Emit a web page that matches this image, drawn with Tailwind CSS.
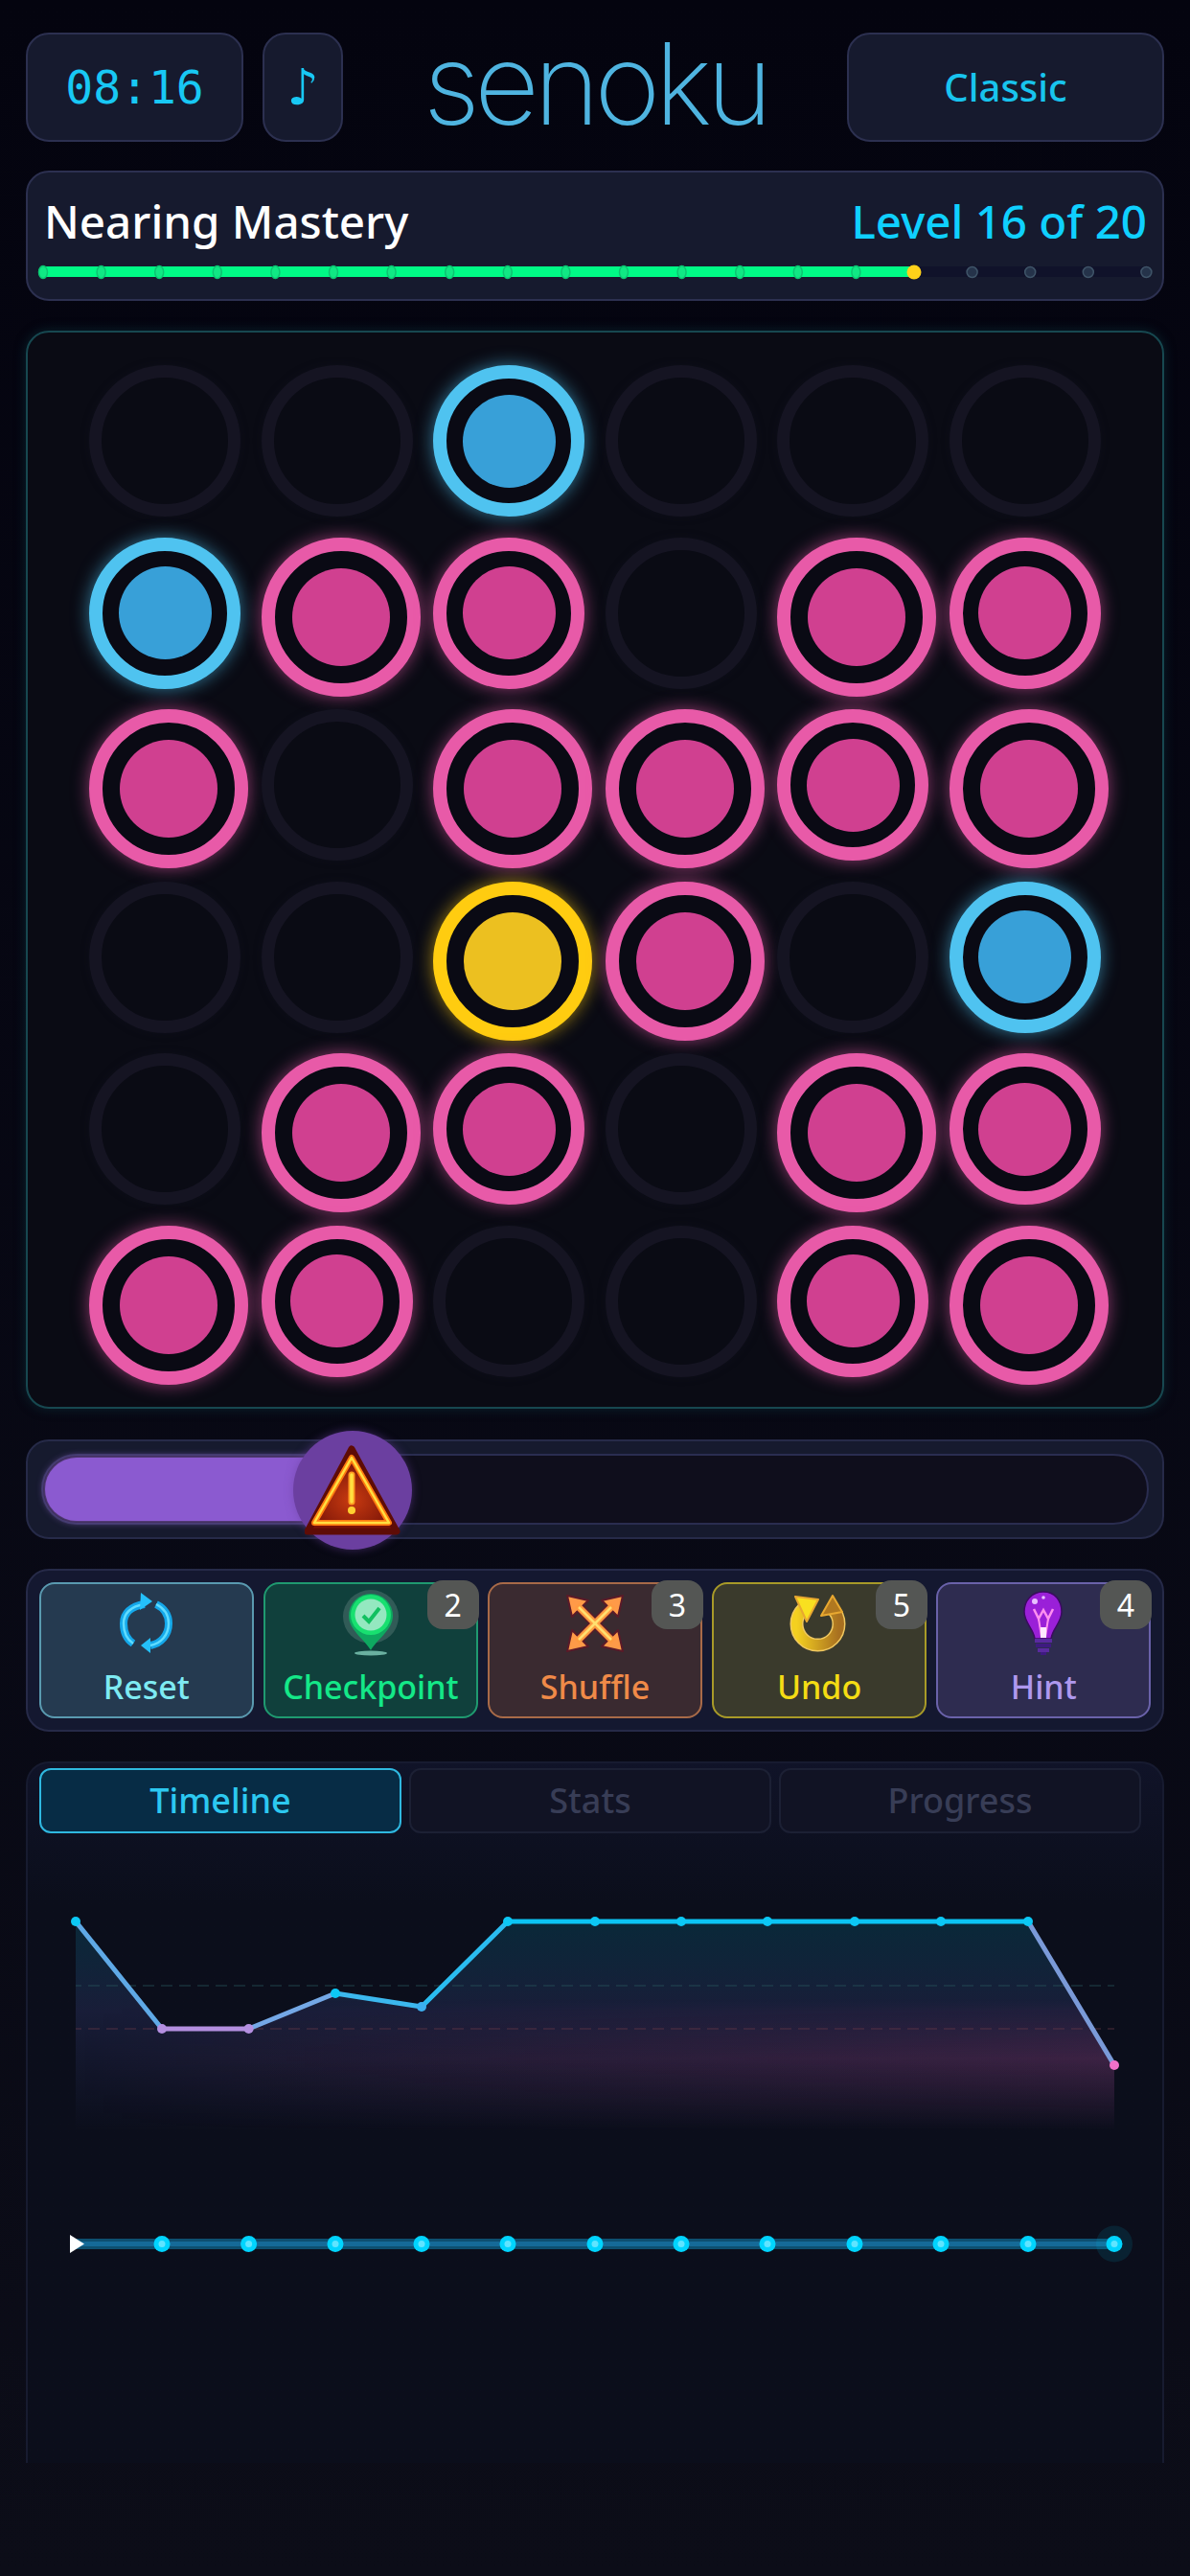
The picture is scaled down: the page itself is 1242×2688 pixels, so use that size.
<!DOCTYPE html>
<html lang="en">
<head>
    <meta charset="UTF-8">
    <meta name="viewport" content="width=device-width, initial-scale=1.0">
    <title>Senoku</title>
    <script src="https://cdn.jsdelivr.net/npm/@tailwindcss/browser@4"></script>
</head>
<body class="w-[1242px] h-[2688px] overflow-hidden bg-linear-to-b from-[#04040f] to-[#0c0d18] font-['Noto_Sans',sans-serif] px-[27px] pt-[34px]">

    <!-- header -->
    <header class="flex items-stretch h-[114px]">
        <div class="w-[227px] flex items-center justify-center rounded-[24px] border-2 border-[#2c3050] bg-[#161a2e] font-['DejaVu_Sans_Mono',monospace] text-[48px] text-[#18c8f4]">08:16</div>
        <div class="w-[84px] ml-[20px] flex items-center justify-center rounded-[24px] border-2 border-[#2c3050] bg-[#161a2e] font-['DejaVu_Sans',sans-serif] text-[52px] text-[#18c8f4]">♪</div>
        <div class="flex-1 flex items-center justify-center font-['Inter',sans-serif] font-extralight text-[118px] leading-none tracking-[-6px] text-[#4fb4e0] pb-[8px]">senoku</div>
        <div class="w-[331px] flex items-center justify-center rounded-[24px] border-2 border-[#2c3050] bg-[#161a2e] text-[40px] font-medium text-[#18c4ee]">Classic</div>
    </header>

    <!-- level progress -->
    <section class="mt-[30px] h-[136px] rounded-[24px] border-2 border-[#2c3050] bg-[#161a2e]">
        <div class="flex items-center justify-between pl-[17px] pr-[16px] pt-[21px] leading-[60px]">
            <span class="text-[47.5px] font-medium text-white">Nearing Mastery</span>
            <span class="text-[47.5px] font-medium text-[#0fd0ff]">Level 16 of 20</span>
        </div>
        <svg class="block mt-[9px]" width="1184" height="30" viewBox="29 270 1184 30">
            <rect x="40" y="278" width="1160" height="11" rx="5.5" fill="#10122a"/>
            <rect x="40" y="278" width="914" height="11" rx="5.5" fill="#00fa86"/>
            <g fill="#10e884" stroke="#0cc472" stroke-width="1.5">
                <ellipse cx="45" cy="284" rx="4.5" ry="6.5"/><ellipse cx="105.6" cy="284" rx="4.5" ry="6.5"/><ellipse cx="166.2" cy="284" rx="4.5" ry="6.5"/><ellipse cx="226.8" cy="284" rx="4.5" ry="6.5"/><ellipse cx="287.4" cy="284" rx="4.5" ry="6.5"/>
                <ellipse cx="348" cy="284" rx="4.5" ry="6.5"/><ellipse cx="408.6" cy="284" rx="4.5" ry="6.5"/><ellipse cx="469.2" cy="284" rx="4.5" ry="6.5"/><ellipse cx="529.8" cy="284" rx="4.5" ry="6.5"/><ellipse cx="590.4" cy="284" rx="4.5" ry="6.5"/>
                <ellipse cx="651" cy="284" rx="4.5" ry="6.5"/><ellipse cx="711.6" cy="284" rx="4.5" ry="6.5"/><ellipse cx="772.2" cy="284" rx="4.5" ry="6.5"/><ellipse cx="832.8" cy="284" rx="4.5" ry="6.5"/><ellipse cx="893.4" cy="284" rx="4.5" ry="6.5"/>
            </g>
            <circle cx="954" cy="284" r="7.5" fill="#ffd21a"/>
            <g fill="#25334a" stroke="#3f5468" stroke-width="1.5">
                <circle cx="1014.6" cy="284" r="5.5"/><circle cx="1075.2" cy="284" r="5.5"/><circle cx="1135.8" cy="284" r="5.5"/><circle cx="1196.4" cy="284" r="5.5"/>
            </g>
        </svg>
    </section>

    <!-- board -->
    <section class="mt-[31px] h-[1125px] rounded-[24px] border-2 border-[#174850] bg-[#0a0b14] shadow-[0_0_12px_#0d3a4488] pl-[64px] pt-[34px]">
        <div class="grid grid-cols-[repeat(6,179.6px)] auto-rows-[179.5px] items-start justify-items-start">
            <!-- row 1 -->
            <div class="size-[158px] rounded-full border-[13px] border-[#151422] shadow-[0_0_8px_#14132266]"></div>
            <div class="size-[158px] rounded-full border-[13px] border-[#151422] shadow-[0_0_8px_#14132266]"></div>
            <div class="size-[158px] rounded-full border-[14px] border-[#4fc3f0] bg-[#0a0a14] shadow-[0_0_18px_#4fc3f099] flex items-center justify-center"><div class="size-[97px] rounded-full bg-[#38a0d8]"></div></div>
            <div class="size-[158px] rounded-full border-[13px] border-[#151422] shadow-[0_0_8px_#14132266]"></div>
            <div class="size-[158px] rounded-full border-[13px] border-[#151422] shadow-[0_0_8px_#14132266]"></div>
            <div class="size-[158px] rounded-full border-[13px] border-[#151422] shadow-[0_0_8px_#14132266]"></div>
            <!-- row 2 -->
            <div class="size-[158px] rounded-full border-[14px] border-[#4fc3f0] bg-[#0a0a14] shadow-[0_0_18px_#4fc3f099] flex items-center justify-center"><div class="size-[97px] rounded-full bg-[#38a0d8]"></div></div>
            <div class="size-[166px] rounded-full border-[14px] border-[#e85aa8] bg-[#0a0a14] shadow-[0_0_18px_#e85aa899] flex items-center justify-center"><div class="size-[102px] rounded-full bg-[#d04090]"></div></div>
            <div class="size-[158px] rounded-full border-[14px] border-[#e85aa8] bg-[#0a0a14] shadow-[0_0_18px_#e85aa899] flex items-center justify-center"><div class="size-[97px] rounded-full bg-[#d04090]"></div></div>
            <div class="size-[158px] rounded-full border-[13px] border-[#151422] shadow-[0_0_8px_#14132266]"></div>
            <div class="size-[166px] rounded-full border-[14px] border-[#e85aa8] bg-[#0a0a14] shadow-[0_0_18px_#e85aa899] flex items-center justify-center"><div class="size-[102px] rounded-full bg-[#d04090]"></div></div>
            <div class="size-[158px] rounded-full border-[14px] border-[#e85aa8] bg-[#0a0a14] shadow-[0_0_18px_#e85aa899] flex items-center justify-center"><div class="size-[97px] rounded-full bg-[#d04090]"></div></div>
            <!-- row 3 -->
            <div class="size-[166px] rounded-full border-[14px] border-[#e85aa8] bg-[#0a0a14] shadow-[0_0_18px_#e85aa899] flex items-center justify-center"><div class="size-[102px] rounded-full bg-[#d04090]"></div></div>
            <div class="size-[158px] rounded-full border-[13px] border-[#151422] shadow-[0_0_8px_#14132266]"></div>
            <div class="size-[166px] rounded-full border-[14px] border-[#e85aa8] bg-[#0a0a14] shadow-[0_0_18px_#e85aa899] flex items-center justify-center"><div class="size-[102px] rounded-full bg-[#d04090]"></div></div>
            <div class="size-[166px] rounded-full border-[14px] border-[#e85aa8] bg-[#0a0a14] shadow-[0_0_18px_#e85aa899] flex items-center justify-center"><div class="size-[102px] rounded-full bg-[#d04090]"></div></div>
            <div class="size-[158px] rounded-full border-[14px] border-[#e85aa8] bg-[#0a0a14] shadow-[0_0_18px_#e85aa899] flex items-center justify-center"><div class="size-[97px] rounded-full bg-[#d04090]"></div></div>
            <div class="size-[166px] rounded-full border-[14px] border-[#e85aa8] bg-[#0a0a14] shadow-[0_0_18px_#e85aa899] flex items-center justify-center"><div class="size-[102px] rounded-full bg-[#d04090]"></div></div>
            <!-- row 4 -->
            <div class="size-[158px] rounded-full border-[13px] border-[#151422] shadow-[0_0_8px_#14132266]"></div>
            <div class="size-[158px] rounded-full border-[13px] border-[#151422] shadow-[0_0_8px_#14132266]"></div>
            <div class="size-[166px] rounded-full border-[14px] border-[#ffcc10] bg-[#0a0a14] shadow-[0_0_18px_#ffcc1099] flex items-center justify-center"><div class="size-[102px] rounded-full bg-[#ecc020]"></div></div>
            <div class="size-[166px] rounded-full border-[14px] border-[#e85aa8] bg-[#0a0a14] shadow-[0_0_18px_#e85aa899] flex items-center justify-center"><div class="size-[102px] rounded-full bg-[#d04090]"></div></div>
            <div class="size-[158px] rounded-full border-[13px] border-[#151422] shadow-[0_0_8px_#14132266]"></div>
            <div class="size-[158px] rounded-full border-[14px] border-[#4fc3f0] bg-[#0a0a14] shadow-[0_0_18px_#4fc3f099] flex items-center justify-center"><div class="size-[97px] rounded-full bg-[#38a0d8]"></div></div>
            <!-- row 5 -->
            <div class="size-[158px] rounded-full border-[13px] border-[#151422] shadow-[0_0_8px_#14132266]"></div>
            <div class="size-[166px] rounded-full border-[14px] border-[#e85aa8] bg-[#0a0a14] shadow-[0_0_18px_#e85aa899] flex items-center justify-center"><div class="size-[102px] rounded-full bg-[#d04090]"></div></div>
            <div class="size-[158px] rounded-full border-[14px] border-[#e85aa8] bg-[#0a0a14] shadow-[0_0_18px_#e85aa899] flex items-center justify-center"><div class="size-[97px] rounded-full bg-[#d04090]"></div></div>
            <div class="size-[158px] rounded-full border-[13px] border-[#151422] shadow-[0_0_8px_#14132266]"></div>
            <div class="size-[166px] rounded-full border-[14px] border-[#e85aa8] bg-[#0a0a14] shadow-[0_0_18px_#e85aa899] flex items-center justify-center"><div class="size-[102px] rounded-full bg-[#d04090]"></div></div>
            <div class="size-[158px] rounded-full border-[14px] border-[#e85aa8] bg-[#0a0a14] shadow-[0_0_18px_#e85aa899] flex items-center justify-center"><div class="size-[97px] rounded-full bg-[#d04090]"></div></div>
            <!-- row 6 -->
            <div class="size-[166px] rounded-full border-[14px] border-[#e85aa8] bg-[#0a0a14] shadow-[0_0_18px_#e85aa899] flex items-center justify-center"><div class="size-[102px] rounded-full bg-[#d04090]"></div></div>
            <div class="size-[158px] rounded-full border-[14px] border-[#e85aa8] bg-[#0a0a14] shadow-[0_0_18px_#e85aa899] flex items-center justify-center"><div class="size-[97px] rounded-full bg-[#d04090]"></div></div>
            <div class="size-[158px] rounded-full border-[13px] border-[#151422] shadow-[0_0_8px_#14132266]"></div>
            <div class="size-[158px] rounded-full border-[13px] border-[#151422] shadow-[0_0_8px_#14132266]"></div>
            <div class="size-[158px] rounded-full border-[14px] border-[#e85aa8] bg-[#0a0a14] shadow-[0_0_18px_#e85aa899] flex items-center justify-center"><div class="size-[97px] rounded-full bg-[#d04090]"></div></div>
            <div class="size-[166px] rounded-full border-[14px] border-[#e85aa8] bg-[#0a0a14] shadow-[0_0_18px_#e85aa899] flex items-center justify-center"><div class="size-[102px] rounded-full bg-[#d04090]"></div></div>
        </div>
    </section>

    <!-- slider -->
    <section class="relative mt-[32px] h-[104px] rounded-[24px] border-2 border-[#262a48] bg-[#161a2e] px-[14px] py-[13px]">
        <div class="h-full rounded-full border-2 border-[#2a2d50] bg-[#0f0e1c] p-[2px]">
            <div class="w-[330px] h-full rounded-full bg-[#8b5ad0] shadow-[0_0_8px_#a070e0]"></div>
        </div>
        <div class="absolute left-[277px] top-[-11px] size-[124px] rounded-full bg-[#6b3fa0] shadow-[0_0_10px_#6b3fa088] flex items-center justify-center">
            <svg width="100" height="95" viewBox="0 0 100 95">
                <defs><radialGradient id="warnFill" cx=".5" cy=".65" r=".6"><stop offset="0" stop-color="#c83a10"/><stop offset="1" stop-color="#7a1408"/></radialGradient></defs>
                <polygon points="49,4 96,90 3,90" fill="#7a1208" stroke="#5e0c06" stroke-width="7" stroke-linejoin="round"/>
                <polygon points="49,13 88,81 10,81" fill="url(#warnFill)" stroke="#ff7a10" stroke-width="6" stroke-linejoin="round"/>
                <polygon points="49,13 88,81 10,81" fill="none" stroke="#ffe040" stroke-width="2.5" stroke-linejoin="round"/>
                <line x1="49" y1="31" x2="49" y2="59" stroke="#ff9a20" stroke-width="7" stroke-linecap="round"/>
                <line x1="49" y1="31" x2="49" y2="59" stroke="#ffe040" stroke-width="3.5" stroke-linecap="round"/>
                <circle cx="49" cy="68" r="4" fill="#ffd030"/>
            </svg>
        </div>
    </section>

    <!-- actions -->
    <section class="mt-[31px] h-[170px] rounded-[24px] border-2 border-[#262a48] bg-[#141830] px-[12px] py-[12px] grid grid-cols-5 gap-[10.5px]">
        <button class="relative h-[142px] rounded-[16px] border-2 border-[#5a9ab0] bg-[#253a50] flex flex-col items-center pt-[1px]">
            <span class="h-[80px] flex items-center justify-center">
                <svg class="block" width="58" height="64" viewBox="0 0 58 64" fill="none">
                    <path d="M27 12C12 14 5 22 5 32C5 42 9 49 15 53" stroke="#14a8ea" stroke-width="8"/>
                    <path d="M39 12C47 16 52 23 52 32C52 44 44 53 33 55" stroke="#14a8ea" stroke-width="8"/>
                    <path d="M27 12C12 14 5 22 5 32C5 42 9 49 15 53" stroke="#60dcff" stroke-width="2.5"/>
                    <path d="M39 12C47 16 52 23 52 32C52 44 44 53 33 55" stroke="#60dcff" stroke-width="2.5"/>
                    <polygon points="23,0 35,9 22,18" fill="#24c0fa"/>
                    <polygon points="33,47 23,55 33,63" fill="#24c0fa"/>
                </svg>
            </span>
            <span class="mt-[4px] text-[34px] leading-[44px] font-medium text-[#7eeaf2]">Reset</span>
        </button>
        <button class="relative h-[142px] rounded-[16px] border-2 border-[#1f9a70] bg-[#10403c] flex flex-col items-center pt-[1px]">
            <span class="absolute right-[-3px] top-[-4px] w-[54px] h-[51px] rounded-[16px] bg-[#545654] flex items-center justify-center text-[32px] text-white">2</span>
            <span class="h-[80px] flex items-center justify-center">
                <svg class="block" width="60" height="70" viewBox="0 0 60 70">
                    <ellipse cx="30" cy="28" rx="29" ry="28" fill="#ffffff" fill-opacity=".14"/>
                    <path d="M30 63C24 52 7 42 7 27A23 23 0 0 1 53 27C53 42 36 52 30 63Z" fill="#0ea860"/>
                    <circle cx="30" cy="26" r="21" fill="#18e070"/>
                    <circle cx="30" cy="26" r="16.5" fill="#94e8c0"/>
                    <path d="M22 27L28 33L39 19" fill="none" stroke="#10c060" stroke-width="4"/>
                    <ellipse cx="30" cy="66" rx="17" ry="2.5" fill="#6ab0a0"/>
                </svg>
            </span>
            <span class="mt-[4px] text-[34px] leading-[44px] font-medium text-[#14e888]">Checkpoint</span>
        </button>
        <button class="relative h-[142px] rounded-[16px] border-2 border-[#a86a48] bg-[#3a2a30] flex flex-col items-center pt-[1px]">
            <span class="absolute right-[-3px] top-[-4px] w-[54px] h-[51px] rounded-[16px] bg-[#545654] flex items-center justify-center text-[32px] text-white">3</span>
            <span class="h-[80px] flex items-center justify-center">
                <svg class="block" width="62" height="62" viewBox="0 0 62 62">
                    <g stroke="#5a1a28" stroke-width="10" stroke-linecap="round"><line x1="12" y1="12" x2="50" y2="50"/><line x1="50" y1="12" x2="12" y2="50"/></g>
                    <g fill="#ff9a48" stroke="#5a1a28" stroke-width="2" stroke-linejoin="round">
                        <polygon points="2,2 24,7 7,24"/><polygon points="60,2 38,7 55,24"/><polygon points="2,60 7,38 24,55"/><polygon points="60,60 55,38 38,55"/>
                    </g>
                    <g stroke="#ff9a40" stroke-width="7"><line x1="12" y1="12" x2="50" y2="50"/><line x1="50" y1="12" x2="12" y2="50"/></g>
                    <g stroke="#ffe070" stroke-width="2.5"><line x1="14" y1="14" x2="48" y2="48"/><line x1="48" y1="14" x2="14" y2="48"/></g>
                </svg>
            </span>
            <span class="mt-[4px] text-[34px] leading-[44px] font-medium text-[#f08a48]">Shuffle</span>
        </button>
        <button class="relative h-[142px] rounded-[16px] border-2 border-[#a89a28] bg-[#3a3a2c] flex flex-col items-center pt-[1px]">
            <span class="absolute right-[-3px] top-[-4px] w-[54px] h-[51px] rounded-[16px] bg-[#545654] flex items-center justify-center text-[32px] text-white">5</span>
            <span class="h-[80px] flex items-center justify-center">
                <svg class="block" width="62" height="60" viewBox="0 0 62 60">
                    <defs><linearGradient id="undoGold" x1="0" y1="0" x2="1" y2="0"><stop offset="0" stop-color="#f4d020"/><stop offset="1" stop-color="#a87020"/></linearGradient></defs>
                    <path d="M14 15A22 22 0 1 0 45 15" fill="none" stroke="#f0c860" stroke-width="14"/>
                    <path d="M14 15A22 22 0 1 0 45 15" fill="none" stroke="url(#undoGold)" stroke-width="11"/>
                    <polygon points="6,2 30,5 18,28" fill="#f8e020" stroke="#e8a830" stroke-width="2" stroke-linejoin="round"/>
                    <polygon points="45,1 55,18 33,22" fill="#b07820" stroke="#e8a830" stroke-width="2" stroke-linejoin="round"/>
                </svg>
            </span>
            <span class="mt-[4px] text-[34px] leading-[44px] font-medium text-[#f4dc14]">Undo</span>
        </button>
        <button class="relative h-[142px] rounded-[16px] border-2 border-[#6a62aa] bg-[#2e2c50] flex flex-col items-center pt-[1px]">
            <span class="absolute right-[-3px] top-[-4px] w-[54px] h-[51px] rounded-[16px] bg-[#545654] flex items-center justify-center text-[32px] text-white">4</span>
            <span class="h-[80px] flex items-center justify-center">
                <svg class="block" width="44" height="68" viewBox="0 0 44 68">
                    <path d="M22 1C10 1 2 10 2 22C2 33 12 40 13 50H30C31 40 41 33 41 22C41 10 34 1 22 1Z" fill="#9a20d8" stroke="#3a0a60" stroke-width="1.5"/>
                    <path d="M12 19L17 29L22 20L27 29L32 19" fill="none" stroke="#ff90f0" stroke-width="2.5"/>
                    <path d="M17 29L20 48M27 29L24 48" stroke="#ff90f0" stroke-width="2"/>
                    <rect x="19" y="38" width="6" height="11" fill="#ffe8ff"/>
                    <circle cx="13" cy="11" r="3" fill="#e8c0ff"/><circle cx="22" cy="7" r="1.8" fill="#e8c0ff"/>
                    <rect x="13" y="50" width="18" height="4" fill="#5a2aa0"/><rect x="14" y="55" width="16" height="4" fill="#3e1a80"/><rect x="16" y="60" width="12" height="4" fill="#5a2aa0"/>
                    <rect x="19" y="64" width="6" height="3" fill="#3e1a80"/>
                </svg>
            </span>
            <span class="mt-[4px] text-[34px] leading-[44px] font-medium text-[#ae98ee]">Hint</span>
        </button>
    </section>

    <!-- timeline -->
    <section class="mt-[31px] h-[732px] rounded-t-[24px] border-2 border-b-0 border-[#171b30] bg-linear-to-b from-[#101328] to-[#0b0e1b] to-[20%] pt-[5px]">
        <div class="grid grid-cols-3 gap-[8px] ml-[12px] mr-[22px]">
            <div class="h-[68px] rounded-[12px] border-2 border-[#2fb8e0] bg-[#072c45] flex items-center justify-center text-[36px] font-medium text-[#2cc8f0]">Timeline</div>
            <div class="h-[68px] rounded-[12px] border-2 border-[#1c2034] bg-[#111324] flex items-center justify-center text-[36px] font-medium text-[#383d56]">Stats</div>
            <div class="h-[68px] rounded-[12px] border-2 border-[#1c2034] bg-[#111324] flex items-center justify-center text-[36px] font-medium text-[#383d56]">Progress</div>
        </div>
        <svg class="block mt-[18px]" width="1184" height="440" viewBox="29 1930 1184 440">
            <defs>
                <linearGradient id="areaFill" gradientUnits="userSpaceOnUse" x1="0" y1="2003" x2="0" y2="2223">
                    <stop offset="0" stop-color="#00c8f0" stop-opacity=".14"/>
                    <stop offset=".42" stop-color="#5a68c8" stop-opacity=".17"/>
                    <stop offset="1" stop-color="#5a68c8" stop-opacity="0"/>
                </linearGradient>
                <linearGradient id="pinkFill" gradientUnits="userSpaceOnUse" x1="79" y1="0" x2="1163" y2="0">
                    <stop offset="0" stop-color="#e050a0" stop-opacity="0"/>
                    <stop offset=".45" stop-color="#e050a0" stop-opacity=".1"/>
                    <stop offset="1" stop-color="#e050a0" stop-opacity=".2"/>
                </linearGradient>
                <linearGradient id="pinkBand" gradientUnits="userSpaceOnUse" x1="0" y1="2085" x2="0" y2="2223">
                    <stop offset="0" stop-color="#000000"/>
                    <stop offset=".45" stop-color="#ffffff"/>
                    <stop offset="1" stop-color="#000000"/>
                </linearGradient>
                <mask id="pinkMask" maskUnits="userSpaceOnUse" x="79" y="2000" width="1084" height="224">
                    <rect x="79" y="2000" width="1084" height="224" fill="url(#pinkBand)"/>
                </mask>
            </defs>
            <polygon points="79,2004 169,2116 259.6,2116 350,2079 440,2093 530,2004 621,2004 711,2004 801,2004 892,2004 982,2004 1073,2004 1163,2154 1163,2223 79,2223" fill="url(#areaFill)"/>
            <polygon points="79,2004 169,2116 259.6,2116 350,2079 440,2093 530,2004 621,2004 711,2004 801,2004 892,2004 982,2004 1073,2004 1163,2154 1163,2223 79,2223" fill="url(#pinkFill)" mask="url(#pinkMask)"/>
            <line x1="79" y1="2071" x2="1163" y2="2071" stroke="#2a5a60" stroke-opacity=".7" stroke-width="1" stroke-dasharray="12 7" stroke-dashoffset="6"/>
            <line x1="79" y1="2116" x2="1163" y2="2116" stroke="#6a3a48" stroke-opacity=".7" stroke-width="1" stroke-dasharray="12 7" stroke-dashoffset="6"/>
            <g stroke-width="5" stroke-linecap="round">
                <line x1="79" y1="2004" x2="169" y2="2116" stroke="#5fa9e6"/>
                <line x1="169" y1="2116" x2="259.6" y2="2116" stroke="#b48fe0"/>
                <line x1="259.6" y1="2116" x2="350" y2="2079" stroke="#74a8e6"/>
                <line x1="350" y1="2079" x2="440" y2="2093" stroke="#3cb8ee"/>
                <line x1="440" y1="2093" x2="530" y2="2004" stroke="#2abcf0"/>
                <line x1="530" y1="2004" x2="1073" y2="2004" stroke="#0cc4f4"/>
                <line x1="1073" y1="2004" x2="1163" y2="2154" stroke="#7a9ad8"/>
            </g>
            <g fill="#0cc8f5">
                <circle cx="79" cy="2004" r="5"/><circle cx="350" cy="2079" r="5"/><circle cx="530" cy="2004" r="5"/><circle cx="621" cy="2004" r="5"/><circle cx="711" cy="2004" r="5"/><circle cx="801" cy="2004" r="5"/><circle cx="892" cy="2004" r="5"/><circle cx="982" cy="2004" r="5"/><circle cx="1073" cy="2004" r="5"/>
            </g>
            <circle cx="440" cy="2093" r="5" fill="#3cb0f0"/>
            <circle cx="169" cy="2116" r="5" fill="#b48fe0"/><circle cx="259.6" cy="2116" r="5" fill="#b48fe0"/>
            <circle cx="1163" cy="2154" r="5" fill="#f070c8"/>

            <!-- move track -->
            <rect x="79" y="2335" width="1084" height="11" fill="#0d4f70"/>
            <rect x="79" y="2338" width="1084" height="5" fill="#156a98"/>
            <circle cx="1163" cy="2340.5" r="19" fill="#00d4ff" fill-opacity=".1"/>
            <g fill="#00d4ff">
                <circle cx="169" cy="2340.5" r="8.5"/><circle cx="259.6" cy="2340.5" r="8.5"/><circle cx="350" cy="2340.5" r="8.5"/><circle cx="440" cy="2340.5" r="8.5"/><circle cx="530" cy="2340.5" r="8.5"/><circle cx="621" cy="2340.5" r="8.5"/><circle cx="711" cy="2340.5" r="8.5"/><circle cx="801" cy="2340.5" r="8.5"/><circle cx="892" cy="2340.5" r="8.5"/><circle cx="982" cy="2340.5" r="8.5"/><circle cx="1073" cy="2340.5" r="8.5"/><circle cx="1163" cy="2340.5" r="8.5"/>
            </g>
            <g fill="#60e4ff">
                <circle cx="169" cy="2340.5" r="3.5"/><circle cx="259.6" cy="2340.5" r="3.5"/><circle cx="350" cy="2340.5" r="3.5"/><circle cx="440" cy="2340.5" r="3.5"/><circle cx="530" cy="2340.5" r="3.5"/><circle cx="621" cy="2340.5" r="3.5"/><circle cx="711" cy="2340.5" r="3.5"/><circle cx="801" cy="2340.5" r="3.5"/><circle cx="892" cy="2340.5" r="3.5"/><circle cx="982" cy="2340.5" r="3.5"/><circle cx="1073" cy="2340.5" r="3.5"/><circle cx="1163" cy="2340.5" r="3.5"/>
            </g>
            <polygon points="73,2331 88,2340.5 73,2350" fill="#ffffff"/>
        </svg>
    </section>
</body>
</html>
